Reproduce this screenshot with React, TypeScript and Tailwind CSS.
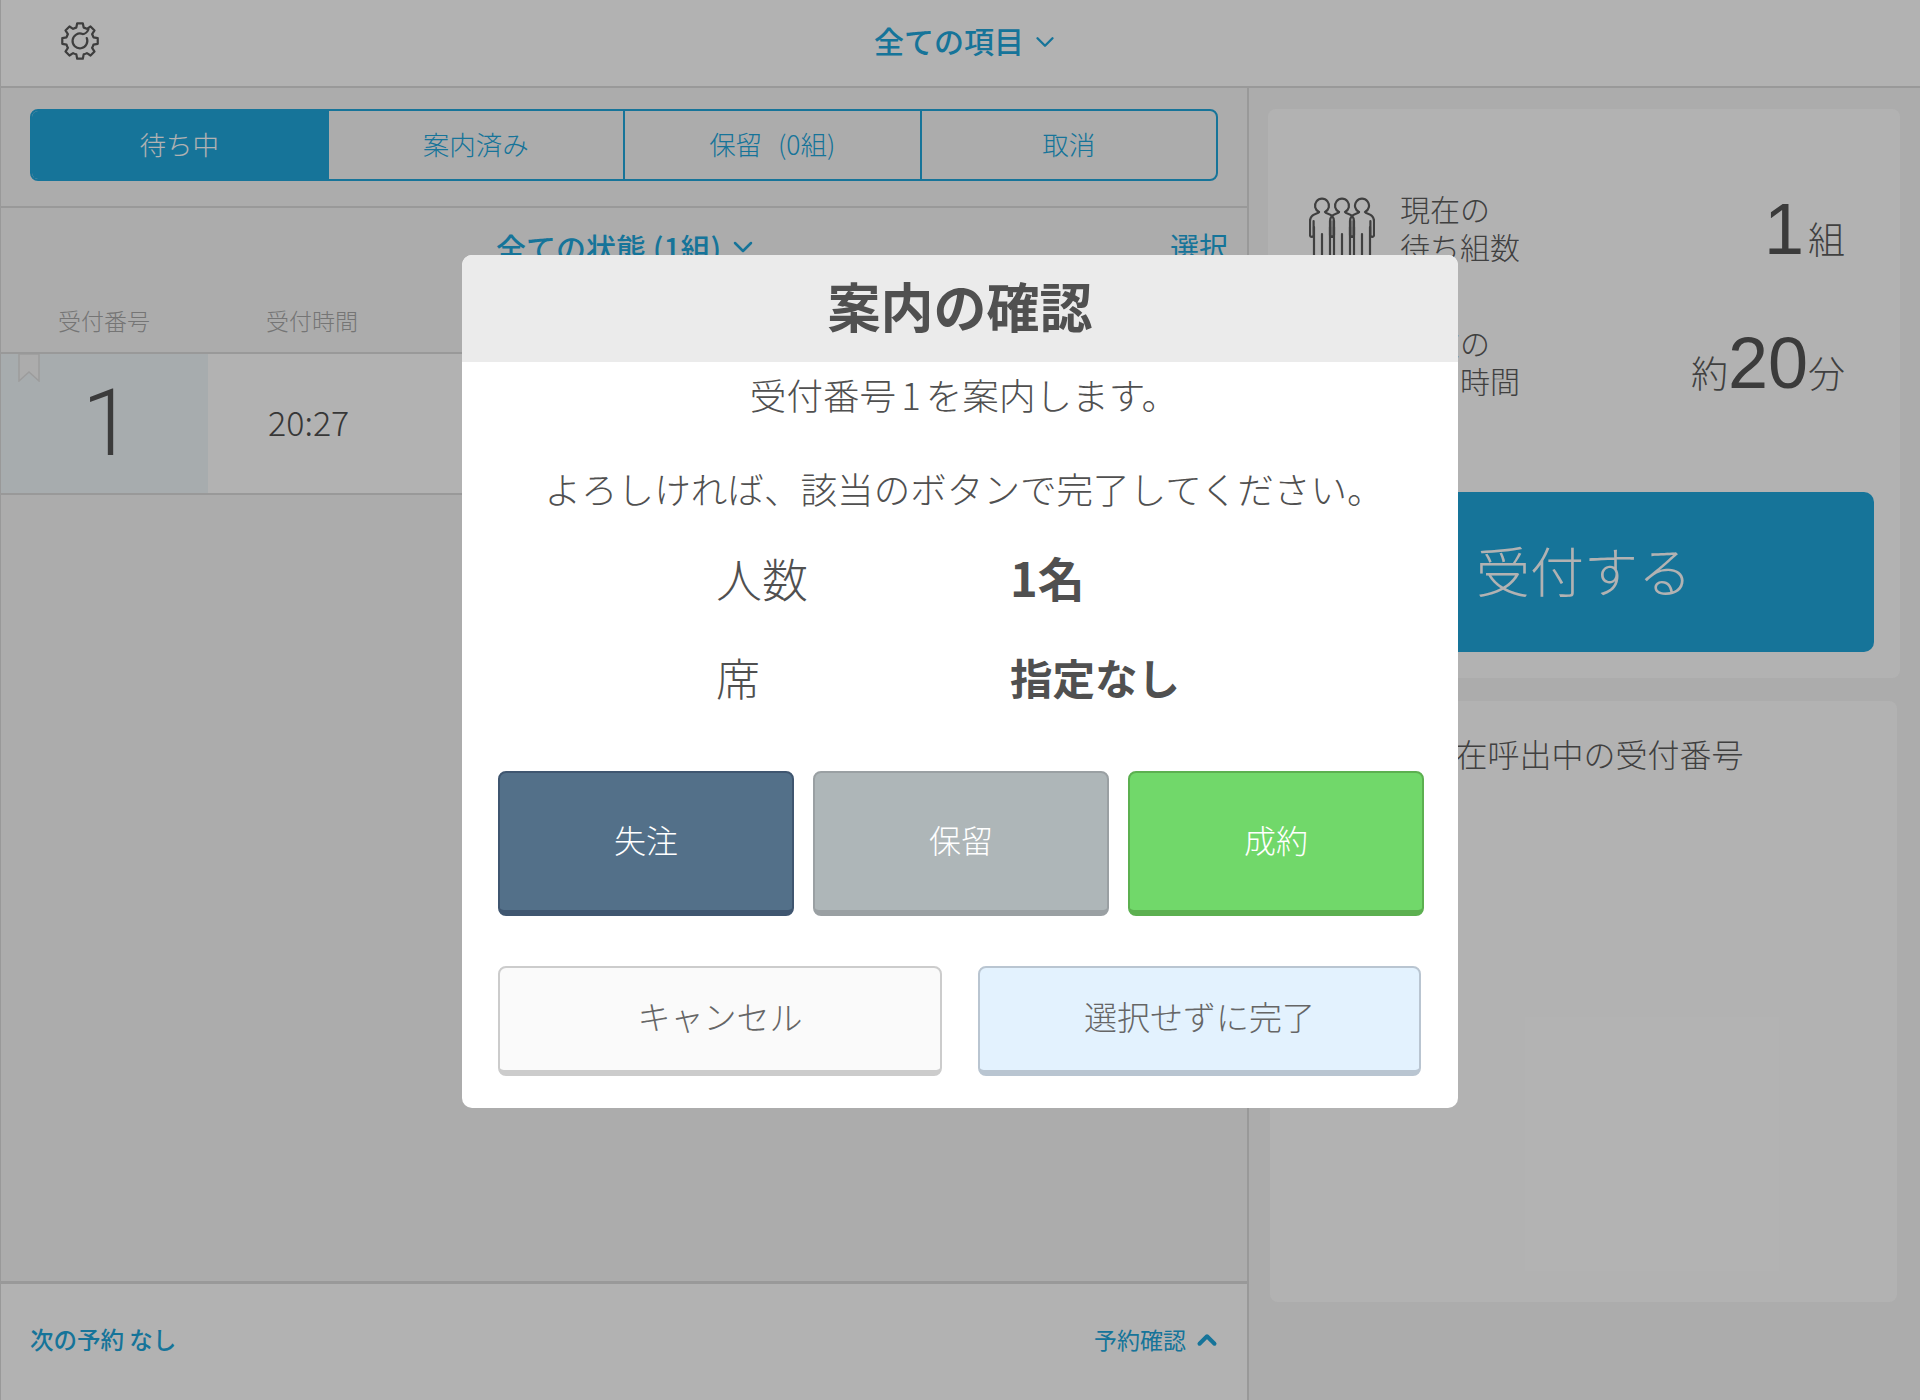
import { ChevronDown, ChevronUp } from "lucide-react";

function gearPath() {
  const cx = 18, cy = 18, teeth = 8;
  const rO = 17, rI = 13.2;
  let d = "";
  for (let i = 0; i < teeth; i++) {
    const a = (i * 2 * Math.PI) / teeth - Math.PI / 2;
    const w = (Math.PI * 2) / teeth;
    const pts = [
      [rI, a - w * 0.34],
      [rO, a - w * 0.2],
      [rO, a + w * 0.2],
      [rI, a + w * 0.34],
    ];
    pts.forEach(([r, t], j) => {
      const x = (cx + r * Math.cos(t)).toFixed(2);
      const y = (cy + r * Math.sin(t)).toFixed(2);
      if (i === 0 && j === 0) d += `M${x} ${y}`;
      else if (j === 0) d += `A${rI} ${rI} 0 0 1 ${x} ${y}`;
      else d += `L${x} ${y}`;
    });
  }
  const a0 = -Math.PI / 2 - (2 * Math.PI / teeth) * 0.34;
  d += `A${rI} ${rI} 0 0 1 ${(cx + rI * Math.cos(a0)).toFixed(2)} ${(cy + rI * Math.sin(a0)).toFixed(2)}Z`;
  return d;
}

function GearIcon() {
  return (
    <svg width="38" height="38" viewBox="0 0 36 36" fill="none" stroke="#5a5a5a" strokeWidth="2.1" strokeLinejoin="round" strokeLinecap="round">
      <path d={gearPath()} />
      <path d="M24.4 15.2 A7 7 0 1 1 20.5 11.4 C22.5 11.5 25 9.5 26 7" />
    </svg>
  );
}

function Person({ x }: { x: number }) {
  return (
    <g transform={`translate(${x} 0)`}>
      <path d="M10 15 A7 7 0 1 1 16 15 C17 17 21 16.5 23 19 C24.5 20.5 25 22 25 24 V38 A1.8 1.8 0 0 1 21.4 38 V24" />
      <path d="M10 15 C9 17 5 16.5 3 19 C1.5 20.5 1 22 1 24 V38 A1.8 1.8 0 0 0 4.6 38 V24" />
      <path d="M5 30 V64 M13 37 V64 M21 30 V64" />
    </g>
  );
}

function PeopleIcon() {
  return (
    <svg width="66" height="62" viewBox="0 0 66 62" fill="none" stroke="#5c5c5c" strokeWidth="2.2" strokeLinecap="round" strokeLinejoin="round" className="shrink-0">
      <Person x={0} />
      <Person x={20} />
      <Person x={40} />
    </svg>
  );
}

function BookmarkIcon() {
  return (
    <svg width="22" height="28" viewBox="0 0 22 28" fill="#f6f6f6" stroke="#e0e0e0" strokeWidth="1.5" className="absolute left-[17px] top-0">
      <path d="M1 0 H21 V27 L11 18 L1 27 Z" />
    </svg>
  );
}

function Stat({ lines, value, icon }: { lines: [string, string]; value: React.ReactNode; icon?: boolean }) {
  return (
    <div className="flex h-[76px] items-start">
      <div className="ml-[41px] mt-[6px] flex w-0">{icon ? <PeopleIcon /> : null}</div>
      <div className="-mt-[2px] ml-[91px] w-[200px] text-[30px] font-light leading-[38px] text-[#5c5c5c]">
        <div>{lines[0]}</div>
        <div>{lines[1]}</div>
      </div>
      <div className="ml-auto mr-[55px] flex h-[76px] items-baseline text-[#5c5c5c]">{value}</div>
    </div>
  );
}

function StatusButton({ label, cls }: { label: string; cls: string }) {
  return (
    <button className={`flex h-[145px] w-[296px] items-center justify-center rounded-[8px] border-2 border-b-[6px] pb-[5px] text-[32px] font-light text-white ${cls}`}>
      {label}
    </button>
  );
}

function Tab({ label, active, last }: { label: string; active?: boolean; last?: boolean }) {
  return (
    <div className={`flex flex-1 items-center justify-center pb-[2px] text-[26.5px] font-light [word-spacing:10px] ${active ? "bg-[#20a6dc] text-white" : "text-[#20a6dc]"} ${last ? "" : "border-r-2 border-[#20a6dc]"}`}>
      {label}
    </div>
  );
}

export default function App() {
  return (
    <div className="relative flex h-[1400px] w-[1920px] flex-col overflow-hidden bg-[#f7f7f7] font-['Noto_Sans_CJK_JP',sans-serif]">
      <header className="relative flex h-[88px] shrink-0 items-center justify-center border-b-2 border-l border-[#dcdcdc] bg-white">
        <div className="absolute left-[60px] top-[22px]"><GearIcon /></div>
        <div className="flex items-center pb-[5px] pl-[13px] text-[30px] font-medium text-[#20a6dc]">
          全ての項目
          <ChevronDown className="ml-[6px] mt-[2px]" size={30} strokeWidth={1.9} />
        </div>
      </header>

      <div className="flex min-h-0 flex-1">
        <main className="flex w-[1249px] shrink-0 flex-col border-r-2 border-l border-[#dcdcdc]">
          <section className="h-[120px] shrink-0 border-b-2 border-[#dcdcdc] pl-[29px] pt-[21px]">
            <div className="flex h-[72px] w-[1188px] overflow-hidden rounded-[8px] border-2 border-[#20a6dc]">
              <Tab label="待ち中" active />
              <Tab label="案内済み" />
              <Tab label="保留 (0組)" />
              <Tab label="取消" last />
            </div>
          </section>

          <section className="flex h-[146px] shrink-0 flex-col border-b-2 border-[#dcdcdc]">
            <div className="flex h-[76px] items-center justify-between pl-[495px] pr-[19px] pt-[2px] text-[#20a6dc]">
              <div className="flex items-center text-[30px] font-medium">
                全ての状態 (1組)
                <ChevronDown className="ml-[6px]" size={32} strokeWidth={1.9} />
              </div>
              <div className="text-[29px] font-normal">選択</div>
            </div>
            <div className="flex flex-1 items-center pl-[57px] pt-[4px] text-[23px] font-light text-[#a8a8a8]">
              <div className="w-[208px]">受付番号</div>
              <div>受付時間</div>
            </div>
          </section>

          <section className="flex h-[141px] shrink-0 border-b-2 border-[#dcdcdc] bg-white">
            <div className="relative flex w-[207px] items-center justify-center bg-[#f0f6fa] pl-[6px] font-['Roboto',sans-serif] text-[92px] font-light text-[#555]">
              <BookmarkIcon />
              1
            </div>
            <div className="flex items-center pb-[4px] pl-[60px] text-[34px] font-light text-[#505050]">20:27</div>
          </section>

          <div className="flex-1" />

          <footer className="flex h-[119px] shrink-0 items-center justify-between border-t-[3px] border-[#dcdcdc] bg-white pb-[5px] pl-[29px] pr-[25px] text-[#20a6dc]">
            <div className="text-[23.5px] font-medium">次の予約 なし</div>
            <div className="flex items-center text-[23px] font-normal">
              予約確認
              <ChevronUp className="ml-[6px]" size={30} strokeWidth={3.2} />
            </div>
          </footer>
        </main>

        <aside className="flex min-w-0 flex-1 flex-col pl-[19px] pt-[21px]">
          <section className="flex h-[569px] w-[632px] shrink-0 flex-col rounded-[8px] bg-white pt-[82px]">
            <Stat
              icon
              lines={["現在の", "待ち組数"]}
              value={
                <>
                  <span className="font-['Liberation_Sans',sans-serif] text-[72px] leading-[76px] text-[#555]">1</span>
                  <span className="ml-[4px] text-[37px] font-light">組</span>
                </>
              }
            />
            <div className="mt-[58px]">
              <Stat
                lines={["現在の", "待ち時間"]}
                value={
                  <>
                    <span className="text-[37px] font-light">約</span>
                    <span className="font-['Liberation_Sans',sans-serif] text-[72px] leading-[76px] text-[#555]">20</span>
                    <span className="text-[37px] font-light">分</span>
                  </>
                }
              />
            </div>
            <div className="mx-[26px] mt-[91px] flex h-[160px] items-center justify-center rounded-[10px] bg-[#20a6dc] pb-[6px] text-[54px] font-light text-white">
              受付する
            </div>
          </section>
          <section className="ml-[2px] mt-[23px] flex h-[601px] w-[627px] flex-col items-center rounded-[8px] bg-white pt-[28px] text-[32px] font-light text-[#5c5c5c]">
            現在呼出中の受付番号
          </section>
        </aside>
      </div>

      <div className="absolute inset-0 bg-black/30" />

      <div className="absolute left-[462px] top-[255px] flex h-[853px] w-[996px] flex-col overflow-hidden rounded-[10px] bg-white text-[#505050]">
        <div className="flex h-[107px] shrink-0 items-center justify-center bg-[#ebebeb] pb-[6px] text-[53px] font-bold">案内の確認</div>
        <div className="flex h-[70px] shrink-0 items-center justify-center pb-[4px] pl-[8px] text-[36.6px] font-light leading-none">
          <div>受付番号<span className="mx-[5px]">1</span>を案内します。</div>
        </div>
        <div className="mt-[25px] flex h-[70px] shrink-0 items-center justify-center pb-[6px] pl-[8px] text-[36.6px] font-light leading-none">よろしければ、該当のボタンで完了してください。</div>
        <div className="mt-[23px] flex h-[60px] shrink-0 items-center pb-[6px] pl-[254px]">
          <div className="w-[294px] text-[46px] font-light">人数</div>
          <div className="text-[47px] font-bold">1名</div>
        </div>
        <div className="mt-[40px] flex h-[60px] shrink-0 items-center pb-[6px] pl-[254px]">
          <div className="w-[294px] text-[44px] font-light">席</div>
          <div className="text-[42.5px] font-bold">指定なし</div>
        </div>
        <div className="ml-[36px] mt-[61px] flex gap-[19px]">
          <StatusButton label="失注" cls="border-[#3f5670] bg-[#537089]" />
          <StatusButton label="保留" cls="border-[#9aa0a3] bg-[#aeb6b8]" />
          <StatusButton label="成約" cls="border-[#5cb050] bg-[#71d86a]" />
        </div>
        <div className="ml-[36px] mt-[50px] flex gap-[36px]">
          <button className="flex h-[110px] w-[444px] items-center justify-center rounded-[8px] border-2 border-b-[6px] border-[#cccccc] bg-[#fafafa] pb-[5px] text-[33px] font-light text-[#666]">キャンセル</button>
          <button className="flex h-[110px] w-[443px] items-center justify-center rounded-[8px] border-2 border-b-[6px] border-[#b9c5d1] bg-[#e3f2fe] pb-[5px] text-[33px] font-light text-[#666]">選択せずに完了</button>
        </div>
      </div>
    </div>
  );
}
